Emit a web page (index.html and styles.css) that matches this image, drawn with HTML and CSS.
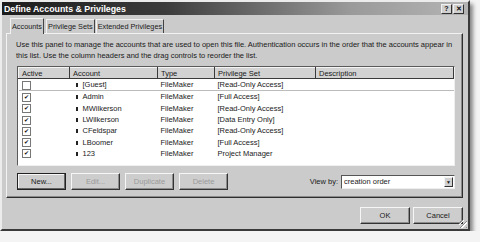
FILE: index.html
```html
<!DOCTYPE html>
<html lang="en">
<head>
    <meta charset="UTF-8">
    <title>Define Accounts &amp; Privileges</title>
    <link rel="stylesheet" href="styles.css">
</head>
<body>
    <div class="window">
        <!-- Title bar -->
        <div class="titlebar">
            <span class="title">Define Accounts &amp; Privileges</span>
            <span class="caption-btns">
                <span class="cap-btn">?</span>
                <span class="cap-btn">&#x2715;</span>
            </span>
        </div>

        <!-- Tabs -->
        <div class="tabs">
            <span class="tab active">Accounts</span>
            <span class="tab">Privilege Sets</span>
            <span class="tab">Extended Privileges</span>
        </div>

        <div class="panel">
            <p class="intro">Use this panel to manage the accounts that are used to open this file. Authentication occurs in the order that the accounts appear in this list. Use the column headers and the drag controls to reorder the list.</p>

            <div class="list">
                <table>
                    <tr>
                        <th class="col-active">Active</th>
                        <th class="col-account">Account</th>
                        <th class="col-type">Type</th>
                        <th class="col-priv">Privilege Set</th>
                        <th>Description</th>
                    </tr>
                    <tr class="focused">
                        <td><span class="check"></span></td>
                        <td><span class="handle"></span>[Guest]</td>
                        <td>FileMaker</td>
                        <td>[Read-Only Access]</td>
                        <td></td>
                    </tr>
                    <tr>
                        <td><span class="check on">&#x2714;</span></td>
                        <td><span class="handle"></span>Admin</td>
                        <td>FileMaker</td>
                        <td>[Full Access]</td>
                        <td></td>
                    </tr>
                    <tr>
                        <td><span class="check on">&#x2714;</span></td>
                        <td><span class="handle"></span>MWilkerson</td>
                        <td>FileMaker</td>
                        <td>[Read-Only Access]</td>
                        <td></td>
                    </tr>
                    <tr>
                        <td><span class="check on">&#x2714;</span></td>
                        <td><span class="handle"></span>LWilkerson</td>
                        <td>FileMaker</td>
                        <td>[Data Entry Only]</td>
                        <td></td>
                    </tr>
                    <tr>
                        <td><span class="check on">&#x2714;</span></td>
                        <td><span class="handle"></span>CFeldspar</td>
                        <td>FileMaker</td>
                        <td>[Read-Only Access]</td>
                        <td></td>
                    </tr>
                    <tr>
                        <td><span class="check on">&#x2714;</span></td>
                        <td><span class="handle"></span>LBoomer</td>
                        <td>FileMaker</td>
                        <td>[Full Access]</td>
                        <td></td>
                    </tr>
                    <tr>
                        <td><span class="check on">&#x2714;</span></td>
                        <td><span class="handle"></span>123</td>
                        <td>FileMaker</td>
                        <td>Project Manager</td>
                        <td></td>
                    </tr>
                </table>
            </div>

            <div class="panel-actions">
                <div class="btn-group">
                    <button class="btn default">New...</button>
                    <button class="btn" disabled>Edit...</button>
                    <button class="btn" disabled>Duplicate</button>
                    <button class="btn" disabled>Delete</button>
                </div>
                <div class="view-by">
                    <span>View by:</span>
                    <div class="combo">
                        <span class="combo-value">creation order</span>
                        <span class="combo-arrow">&#x25BC;</span>
                    </div>
                </div>
            </div>
        </div>

        <div class="footer">
            <button class="btn wide">OK</button>
            <button class="btn wide">Cancel</button>
        </div>
        <span class="grip"></span>
    </div>
</body>
</html>
```

FILE: styles.css
```css
body {
    margin: 0;
    background-color: #f4f4f4;
    font-family: "Liberation Sans", Arial, sans-serif;
    font-size: 7.5px;
    color: #1a1a1a;
}

.window {
    position: relative;
    width: 466px;
    height: 227px;
    background-color: #cbcbcb;
    border: 2px solid;
    border-color: #ececec #3a3a3a #3a3a3a #ececec;
    box-shadow: 3px 4px 4px rgba(0, 0, 0, 0.45);
    display: flex;
    flex-direction: column;
}

.titlebar {
    height: 13px;
    background: linear-gradient(to right, #1c1c1c 0%, #3c3c3c 35%, #9a9a9a 75%, #b4b4b4 100%);
    display: flex;
    align-items: center;
    justify-content: space-between;
    padding: 0 4px 0 2px;
}

.title {
    color: white;
    font-weight: bold;
    font-size: 8.8px;
}

.caption-btns {
    display: flex;
    gap: 1px;
}

.cap-btn {
    width: 9px;
    height: 8px;
    background-color: #d0d0d0;
    border: 1px solid;
    border-color: #f0f0f0 #303030 #303030 #f0f0f0;
    font-size: 7px;
    font-weight: bold;
    line-height: 8px;
    text-align: center;
    color: #111;
}

.tabs {
    display: flex;
    padding: 3px 0 0 8px;
    height: 15px;
    align-items: flex-end;
}

.tab {
    padding: 2px 1px;
    border: 1px solid;
    border-color: #f2f2f2 #444 transparent #f2f2f2;
    border-bottom: none;
    margin-right: 1px;
    line-height: 9px;
    font-size: 7.3px;
}

.tab.active {
    padding: 3px 1px;
    margin-right: 2px;
    margin-bottom: -1px;
    background-color: #cbcbcb;
    position: relative;
}

.panel {
    margin: 0 5px 0 4px;
    height: 165px;
    box-sizing: border-box;
    border: 1px solid;
    border-color: #f2f2f2 #2e2e2e #2e2e2e #f2f2f2;
    box-shadow: inset -1px -1px 0 #8a8a8a;
    display: flex;
    flex-direction: column;
    padding: 5px 7px 0 10px;
}

.intro {
    margin: 0 0 0 -1px;
    line-height: 11px;
    height: 22px;
}

.list {
    margin-top: 5px;
    height: 98px;
    background-color: white;
    border: 1px solid;
    border-color: #5a5a5a #f0f0f0 #f0f0f0 #5a5a5a;
    overflow: hidden;
}

table {
    width: 100%;
    border-collapse: collapse;
}

th {
    height: 10px;
    padding: 0 0 0 3px;
    font-weight: normal;
    text-align: left;
    background-color: #d2d2d2;
    border: 1px solid;
    border-color: #f4f4f4 #3a3a3a #3a3a3a #f4f4f4;
    line-height: 9px;
}

td {
    height: 11.3px;
    padding: 0 0 0 3px;
    line-height: 11px;
    white-space: nowrap;
}

.col-active { width: 47px; }
.col-account { width: 84px; }
.col-type { width: 53px; }
.col-priv { width: 97px; }

tr.focused td {
    border-top: 1px solid #bcbcbc;
    border-bottom: 1px solid #bcbcbc;
}

.check {
    display: inline-block;
    width: 7px;
    height: 7px;
    border: 1px solid #777;
    background-color: white;
    font-size: 6px;
    line-height: 7px;
    text-align: center;
    vertical-align: middle;
    color: #111;
}

.handle {
    display: inline-block;
    width: 2px;
    height: 4px;
    background-color: #222;
    margin: 0 5px 0 3px;
    vertical-align: middle;
}

.panel-actions {
    display: flex;
    justify-content: space-between;
    align-items: center;
    margin-top: 7px;
}

.btn-group {
    display: flex;
    gap: 5px;
}

.btn {
    width: 49px;
    height: 17px;
    padding: 0;
    font-family: "Liberation Sans", Arial, sans-serif;
    font-size: 7.5px;
    color: #1a1a1a;
    background-color: #cdcdcd;
    border: 1px solid;
    border-color: #f6f6f6 #333 #333 #f6f6f6;
    box-shadow: inset -1px -1px 0 #8c8c8c;
}

.btn:disabled {
    color: #9a9a9a;
}

.btn.default {
    border: 1px solid #222;
    box-shadow: inset -1px -1px 0 #666, inset 1px 1px 0 #f6f6f6;
}

.view-by {
    display: flex;
    align-items: center;
    gap: 3px;
}

.combo {
    display: flex;
    align-items: center;
    width: 112px;
    height: 12px;
    background-color: white;
    border: 1px solid;
    border-color: #555 #eee #eee #555;
}

.combo-value {
    flex: 1;
    padding-left: 2px;
}

.combo-arrow {
    width: 9px;
    height: 10px;
    margin-right: 1px;
    background-color: #d0d0d0;
    border: 1px solid;
    border-color: #f4f4f4 #333 #333 #f4f4f4;
    box-sizing: border-box;
    font-size: 5px;
    line-height: 8px;
    text-align: center;
}

.footer {
    display: flex;
    justify-content: flex-end;
    gap: 3px;
    padding: 9px 5px 0 0;
}

.btn.wide {
    width: 50px;
}

.grip {
    position: absolute;
    right: 1px;
    bottom: 1px;
    width: 8px;
    height: 8px;
    background: repeating-linear-gradient(135deg, transparent 0 2px, #888 2px 3px, #fff 3px 4px);
}
```
